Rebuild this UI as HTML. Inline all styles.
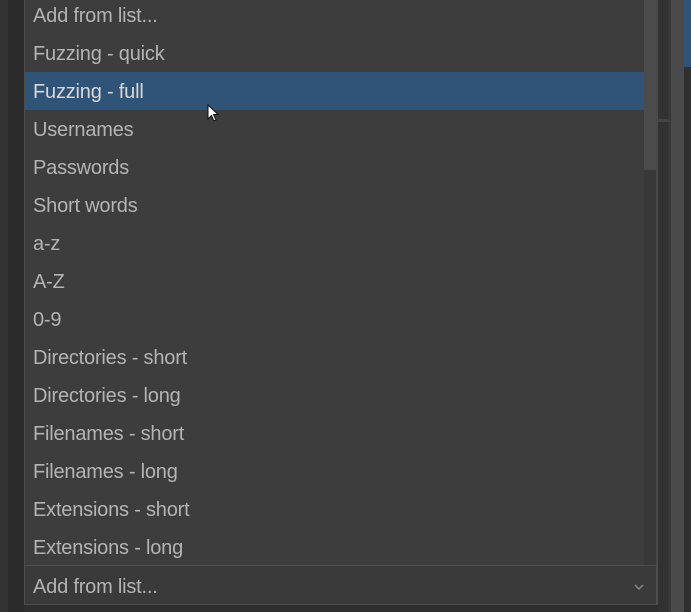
<!DOCTYPE html>
<html><head><style>
body{margin:0;width:691px;height:612px;background:#2f2f2f;position:relative;overflow:hidden;font-family:"Liberation Sans",sans-serif}
.a{position:absolute}
.list{left:24px;top:0;width:620px;height:565px;background:#3d3d3d;border-left:1px solid #4c4c4c}
.row{position:absolute;left:8px;height:38px;line-height:38px;font-size:20px;color:#b4b4b4;white-space:nowrap;letter-spacing:-0.2px}
.sel{left:0;top:72px;width:622px;height:38px;background:#2f5478}
</style></head><body>
<div class="a" style="left:0;top:0;width:8px;height:612px;background:#333"></div>
<div class="a" style="left:8px;top:0;width:16px;height:612px;background:#2b2b2b"></div>
<div class="a list">
<div class="a sel"></div>
<div class="row" style="top:-3px">Add from list...</div>
<div class="row" style="top:35px">Fuzzing - quick</div>
<div class="row" style="top:73px;color:#d8d8d8">Fuzzing - full</div>
<div class="row" style="top:111px">Usernames</div>
<div class="row" style="top:149px">Passwords</div>
<div class="row" style="top:187px">Short words</div>
<div class="row" style="top:225px">a-z</div>
<div class="row" style="top:263px">A-Z</div>
<div class="row" style="top:301px">0-9</div>
<div class="row" style="top:339px">Directories - short</div>
<div class="row" style="top:377px">Directories - long</div>
<div class="row" style="top:415px">Filenames - short</div>
<div class="row" style="top:453px">Filenames - long</div>
<div class="row" style="top:491px">Extensions - short</div>
<div class="row" style="top:529px">Extensions - long</div>
</div>
<div class="a" style="left:644px;top:0;width:13px;height:565px;background:#383838"></div>
<div class="a" style="left:644px;top:0;width:12px;height:170px;background:#4b4b4b"></div>
<div class="a" style="left:656px;top:0;width:2px;height:605px;background:#4a4a4a"></div>
<div class="a" style="left:24px;top:565px;width:633px;height:40px;background:#3a3a3a;border:1px solid #4e4e4e;box-sizing:border-box"></div>
<div class="a" style="left:33px;top:568px;line-height:38px;font-size:20px;color:#b4b4b4;letter-spacing:-0.2px">Add from list...</div>
<svg class="a" style="left:633px;top:582px" width="12" height="10"><path d="M2 3 L6 7 L10 3" stroke="#888" stroke-width="1.5" fill="none"/></svg>
<div class="a" style="left:658px;top:0;width:11px;height:612px;background:#323232"></div>
<div class="a" style="left:658px;top:119px;width:11px;height:3px;background:#444"></div>
<div class="a" style="left:669px;top:0;width:2px;height:612px;background:#3a3a3a"></div>
<div class="a" style="left:671px;top:0;width:13px;height:612px;background:#4a4a4a"></div>
<div class="a" style="left:684px;top:0;width:7px;height:67px;background:#2f5478"></div>
<div class="a" style="left:684px;top:67px;width:7px;height:545px;background:#303030"></div>
<svg class="a" style="left:207px;top:104px" width="14" height="20"><path d="M1 1 L1 15 L4.5 11.5 L7 17 L9 16 L6.5 10.5 L11 10.5 Z" fill="#fff" stroke="#111" stroke-width="1"/></svg>
</body></html>
